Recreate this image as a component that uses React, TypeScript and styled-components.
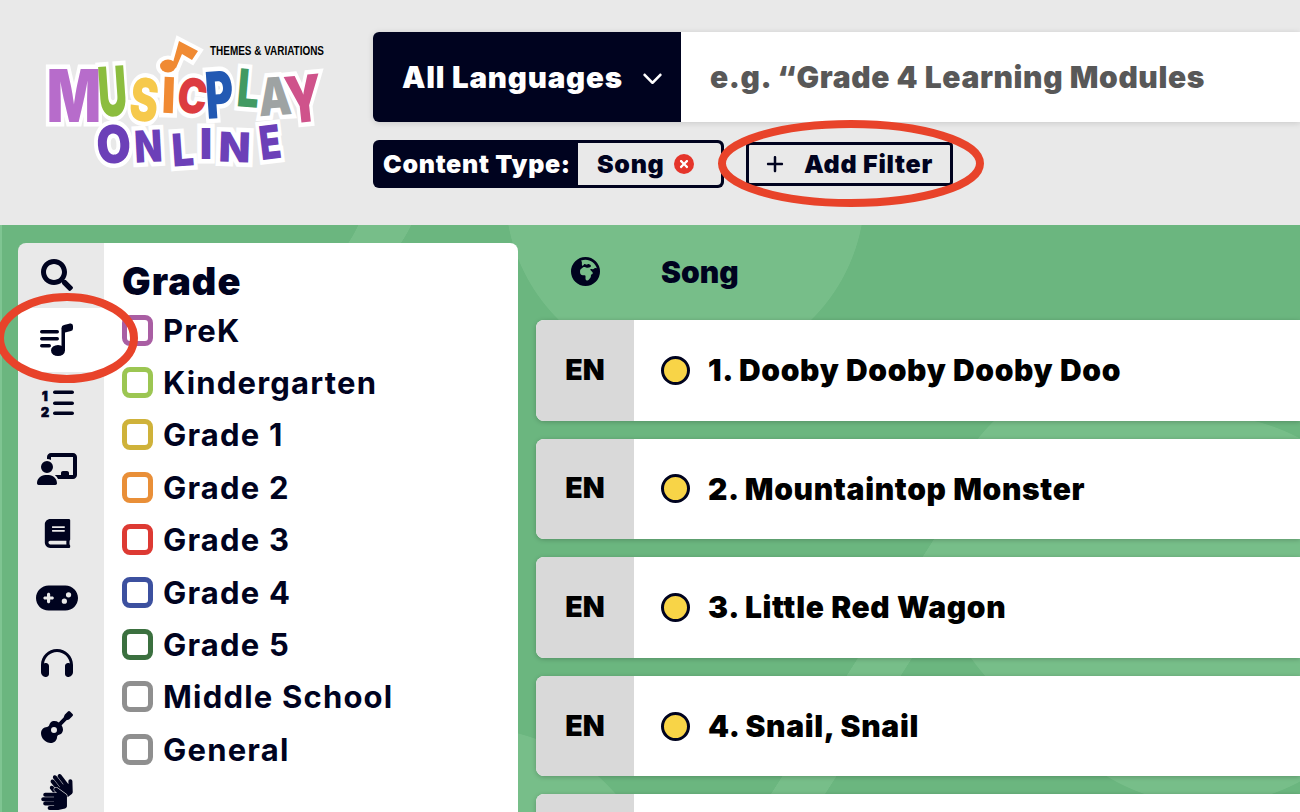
import React from "react";
import styled, { createGlobalStyle } from "styled-components";
import { FaChalkboardUser, FaGamepad, FaHeadphones, FaGuitar, FaEarthAfrica, FaPlus, FaChevronDown } from "react-icons/fa6";
import { FaBook, FaSignLanguage, FaTimes, FaSearch } from "react-icons/fa";

const navy = "#00031f";
const font = `"Inter", "Noto Sans", sans-serif`;
const light = "#77be89";
const base = "#6bb67f";

const Global = createGlobalStyle`
  html, body { margin: 0; padding: 0; background: #e9e9e9; }
  body { font-family: ${font}; color: ${navy}; }
  #root { width: 1300px; height: 812px; overflow: hidden; }
`;

const Page = styled.div`
  position: relative;
  width: 1300px;
  height: 812px;
  overflow: hidden;
  display: flex;
  flex-direction: column;
`;

const Header = styled.header`
  height: 225px;
  flex: none;
  background: #e9e9e9;
  display: flex;
  padding: 32px 0 0 373px;
  box-sizing: border-box;
  position: relative;
`;

const LogoSvg = styled.svg`
  position: absolute;
  left: 0;
  top: 0;
`;

const HeaderCol = styled.div`
  flex: 1;
  display: flex;
  flex-direction: column;
  gap: 18px;
`;

const SearchBar = styled.div`
  height: 90px;
  display: flex;
  background: #fff;
  border-radius: 6px 0 0 6px;
  box-shadow: 0 1px 6px rgba(0, 0, 0, 0.14);
`;

const LangSelect = styled.div`
  width: 308px;
  flex: none;
  background: ${navy};
  color: #fff;
  border-radius: 6px 0 0 6px;
  display: flex;
  align-items: center;
  padding-left: 29px;
  gap: 19px;
  box-sizing: border-box;
  font-size: 29.5px;
  letter-spacing: 0.8px;
  font-weight: 900;
  white-space: nowrap;
`;

const Placeholder = styled.div`
  display: flex;
  align-items: center;
  padding-left: 29px;
  font-size: 30px;
  letter-spacing: 0.6px;
  font-weight: 900;
  color: #585858;
  white-space: nowrap;
`;

const FilterRow = styled.div`
  display: flex;
  align-items: center;
  gap: 22px;
`;

const ActiveFilter = styled.div`
  height: 48px;
  width: 351px;
  box-sizing: border-box;
  background: ${navy};
  border-radius: 6px;
  display: flex;
  padding: 3px;
  color: #fff;
  font-weight: 900;
  font-size: 25px;
  letter-spacing: 0.7px;
`;

const FilterLabel = styled.div`
  width: 202px;
  flex: none;
  padding-left: 7px;
  box-sizing: border-box;
  display: flex;
  align-items: center;
  white-space: nowrap;
`;

const FilterValue = styled.div`
  flex: 1;
  background: #e9e9e9;
  color: ${navy};
  border-radius: 0 4px 4px 0;
  display: flex;
  align-items: center;
  padding-left: 19px;
  gap: 9px;
`;

const RemoveDot = styled.span`
  width: 20px;
  height: 20px;
  border-radius: 50%;
  background: #e5352b;
  display: inline-flex;
  align-items: center;
  justify-content: center;
  color: #fff;
  font-size: 12px;
`;

const AddFilter = styled.div`
  height: 44px;
  width: 207px;
  box-sizing: border-box;
  border: 3px solid ${navy};
  border-radius: 4px;
  display: flex;
  align-items: center;
  padding-left: 16px;
  gap: 19px;
  font-weight: 900;
  font-size: 25px;
  letter-spacing: 0.75px;
  white-space: nowrap;
`;

const Main = styled.main`
  flex: 1;
  min-height: 0;
  display: flex;
  padding: 18px 0 0 18px;
  background-color: ${base};
  background-repeat: no-repeat;
  background-size:
    100% 100%, 100% 100%, 100% 100%, 100% 100%, 100% 100%, 100% 100%, 100% 100%,
    1300px 397px;
  background-position: 0 0, 0 0, 0 0, 0 0, 0 0, 0 0, 0 0, 0 190px;
  background-image:
    linear-gradient(90deg, #7fc592 2px, transparent 2px),
    radial-gradient(circle 180px at 685px -33px, ${light} 99.6%, transparent 100%),
    radial-gradient(circle 142px at 230px -60px, ${base} 99.6%, transparent 100%),
    radial-gradient(circle 140px at 285px -60px, ${light} 99.6%, transparent 100%),
    radial-gradient(circle 185px at 1123px 328px, ${light} 99.6%, transparent 100%),
    radial-gradient(circle 195px at 1208px 385px, ${light} 99.6%, transparent 100%),
    radial-gradient(circle 193px at 470px 695px, ${light} 99.6%, transparent 100%),
    linear-gradient(122.6deg, transparent 853.5px, ${light} 854px, ${light} 899px, transparent 899.5px);
  box-sizing: border-box;
`;

const Rail = styled.nav`
  width: 86px;
  flex: none;
  background: #e9e9e9;
  border-radius: 8px 0 0 0;
  display: flex;
  flex-direction: column;
  align-items: stretch;
`;

const RailItem = styled.div<{ $active?: boolean }>`
  height: 64.6px;
  flex: none;
  display: flex;
  align-items: center;
  justify-content: center;
  padding-right: 8px;
  font-size: 32px;
  color: ${navy};
  background: ${(p) => (p.$active ? "#fff" : "transparent")};
`;

const GradePanel = styled.aside`
  width: 414px;
  flex: none;
  background: #fff;
  border-radius: 0 8px 0 0;
  padding: 18px 0 0 18px;
  box-sizing: border-box;
`;

const PanelTitle = styled.h2`
  margin: 0 0 3px;
  font-size: 38px;
  line-height: 40px;
  letter-spacing: 1px;
  font-weight: 900;
`;

const GradeList = styled.div`
  display: flex;
  flex-direction: column;
`;

const GradeRow = styled.label`
  height: 52.4px;
  display: flex;
  align-items: center;
  gap: 10px;
  font-size: 31px;
  letter-spacing: 1.2px;
  font-weight: 700;
  white-space: nowrap;
`;

const Check = styled.span<{ $c: string }>`
  width: 31px;
  height: 31px;
  box-sizing: border-box;
  border: 5px solid ${(p) => p.$c};
  border-radius: 8px;
  flex: none;
`;

const Results = styled.section`
  flex: 1;
  min-width: 0;
  padding-left: 18px;
`;

const ResultsHead = styled.div`
  height: 77px;
  box-sizing: border-box;
  padding-bottom: 19px;
  display: flex;
  align-items: center;
  font-size: 30px;
  font-weight: 900;
`;

const HeadLang = styled.div`
  width: 98px;
  flex: none;
  display: flex;
  justify-content: center;
  margin-top: -1px;
  font-size: 29px;
`;

const HeadTitle = styled.div`
  padding-left: 27px;
`;

const SongRows = styled.div`
  display: flex;
  flex-direction: column;
  gap: 18.1px;
`;

const SongRow = styled.div`
  height: 100.5px;
  flex: none;
  display: flex;
  background: #fff;
  border-radius: 8px 0 0 8px;
  box-shadow: 0 1px 5px rgba(0, 0, 0, 0.22);
  overflow: hidden;
`;

const LangCell = styled.div`
  width: 98px;
  flex: none;
  background: #d9d9d9;
  display: flex;
  align-items: center;
  justify-content: center;
  font-size: 28.5px;
  font-weight: 900;
  color: #000;
  padding-bottom: 2px;
  box-sizing: border-box;
`;

const TitleCell = styled.div`
  display: flex;
  align-items: center;
  padding-left: 27px;
  gap: 18px;
  font-size: 30px;
  letter-spacing: 0.65px;
  font-weight: 900;
  color: #000;
  white-space: nowrap;
`;

const Dot = styled.span`
  width: 29px;
  height: 29px;
  box-sizing: border-box;
  border-radius: 50%;
  background: #f8d447;
  border: 3px solid ${navy};
  flex: none;
`;

const Marks = styled.svg`
  position: absolute;
  inset: 0;
  pointer-events: none;
`;

const Digit = styled.text`
  font-family: "Inter", sans-serif;
  font-weight: 900;
  font-size: 12.5px;
  stroke: currentColor;
  stroke-width: 0.7px;
`;

const SongListIcon = () => (
  <svg width="34" height="34" viewBox="0 0 34 34" fill="currentColor">
    <rect x="0" y="7" width="19" height="3.5" rx="1.7" />
    <rect x="0" y="14" width="19" height="3.5" rx="1.7" />
    <rect x="0" y="21" width="11" height="3.5" rx="1.7" />
    <ellipse cx="18" cy="27.5" rx="7" ry="5.5" />
    <rect x="21.5" y="5" width="3.5" height="23" />
    <path d="M21.5 5 Q21.5 2.5 24 2 L30 0.5 Q33 0 33 3 V5.5 Q33 7.5 31 8 L25 9.5 Z" />
  </svg>
);

const NumberListIcon = () => (
  <svg width="33" height="38" viewBox="0 0 33 38" fill="currentColor">
    <Digit x="1" y="16">1</Digit>
    <Digit x="0" y="32">2</Digit>
    <rect x="12" y="5.5" width="21" height="3.6" rx="1.8" />
    <rect x="12" y="16.5" width="21" height="3.6" rx="1.8" />
    <rect x="12" y="26.5" width="21" height="3.6" rx="1.8" />
  </svg>
);

type Letter = { ch: string; cx: number; y: number; h: number; sx: number; r: number; c: string };
const purple = "#6c40b8";
const letters: Letter[] = [
  { ch: "M", cx: 74, y: 122, h: 53, sx: 0.78, r: 0, c: "#b76ccb" },
  { ch: "U", cx: 114, y: 116, h: 50, sx: 0.58, r: -4, c: "#8cbd3f" },
  { ch: "S", cx: 142, y: 121, h: 43, sx: 0.72, r: 6, c: "#f6c94c" },
  { ch: "I", cx: 168, y: 113, h: 36, sx: 0.95, r: 2, c: "#f08a33" },
  { ch: "C", cx: 190, y: 113, h: 35, sx: 0.82, r: 8, c: "#dc3c40" },
  { ch: "P", cx: 221, y: 118, h: 47, sx: 0.66, r: -4, c: "#2359b3" },
  { ch: "L", cx: 247, y: 107, h: 38, sx: 0.74, r: 5, c: "#429a62" },
  { ch: "A", cx: 276, y: 115, h: 38, sx: 0.8, r: -4, c: "#9ea3a3" },
  { ch: "Y", cx: 306, y: 122, h: 47, sx: 0.74, r: -6, c: "#cf538b" },
  { ch: "O", cx: 115, y: 163, h: 38, sx: 0.85, r: -4, c: purple },
  { ch: "N", cx: 149, y: 162, h: 32, sx: 0.82, r: -3, c: purple },
  { ch: "L", cx: 184, y: 166, h: 33, sx: 0.85, r: -4, c: purple },
  { ch: "I", cx: 206, y: 159, h: 31, sx: 1, r: 0, c: purple },
  { ch: "N", cx: 234, y: 162, h: 30, sx: 1, r: 2, c: purple },
  { ch: "E", cx: 272, y: 159, h: 34, sx: 0.74, r: -7, c: purple },
];

const LogoLetter = styled.text<{ $halo?: boolean }>`
  font-family: "Inter", sans-serif;
  font-weight: 900;
  text-anchor: middle;
  stroke: ${(p) => (p.$halo ? "#fff" : "none")};
  stroke-width: ${(p) => (p.$halo ? "9px" : "0")};
  stroke-linejoin: miter;
`;

const LogoSub = styled.text`
  font-family: "Liberation Sans", sans-serif;
  font-weight: 700;
  font-size: 13px;
  fill: #000;
`;

const renderLetters = (halo: boolean) =>
  letters.map((l, i) => (
    <LogoLetter
      key={i}
      $halo={halo}
      x={0}
      y={0}
      fontSize={l.h / 0.727}
      fill={l.c}
      transform={`translate(${l.cx} ${l.y}) rotate(${l.r}) scale(${l.sx} 1)`}
    >
      {l.ch}
    </LogoLetter>
  ));

const Note = ({ stroke }: { stroke: string }) => (
  <g fill="#f08a33" stroke={stroke} strokeWidth={stroke === "none" ? 0 : 8} strokeLinejoin="miter">
    <ellipse cx="168" cy="66" rx="8" ry="6.5" />
    <path d="M172 66 L179 41 L198 51 L192 60 L182 54 L176 68 Z" />
  </g>
);

const Logo = () => (
  <LogoSvg width="360" height="225" viewBox="0 0 360 225">
    <Note stroke="#fff" />
    {renderLetters(true)}
    <Note stroke="none" />
    {renderLetters(false)}
    <LogoSub x="210" y="55" textLength="114" lengthAdjust="spacingAndGlyphs">THEMES &amp; VARIATIONS</LogoSub>
  </LogoSvg>
);

const grades: [string, string][] = [
  ["PreK", "#a95ea3"],
  ["Kindergarten", "#9cc652"],
  ["Grade 1", "#cfb23a"],
  ["Grade 2", "#e98f38"],
  ["Grade 3", "#dd3a33"],
  ["Grade 4", "#3c509f"],
  ["Grade 5", "#3b703f"],
  ["Middle School", "#8f8f8f"],
  ["General", "#8f8f8f"],
];

const songs = ["1. Dooby Dooby Dooby Doo", "2. Mountaintop Monster", "3. Little Red Wagon", "4. Snail, Snail", ""];

export default function App() {
  return (
    <Page>
      <Global />
      <Header>
        <Logo />
        <HeaderCol>
          <SearchBar>
            <LangSelect>All Languages <FaChevronDown size={21} /></LangSelect>
            <Placeholder>e.g. “Grade 4 Learning Modules</Placeholder>
          </SearchBar>
          <FilterRow>
            <ActiveFilter>
              <FilterLabel>Content Type:</FilterLabel>
              <FilterValue>Song <RemoveDot><FaTimes /></RemoveDot></FilterValue>
            </ActiveFilter>
            <AddFilter><FaPlus size={20} /> Add Filter</AddFilter>
          </FilterRow>
        </HeaderCol>
      </Header>
      <Main>
        <Rail>
          <RailItem><FaSearch /></RailItem>
          <RailItem $active><SongListIcon /></RailItem>
          <RailItem><NumberListIcon /></RailItem>
          <RailItem><FaChalkboardUser size={40} /></RailItem>
          <RailItem><FaBook size={29} /></RailItem>
          <RailItem><FaGamepad size={42} /></RailItem>
          <RailItem><FaHeadphones /></RailItem>
          <RailItem><FaGuitar /></RailItem>
          <RailItem><FaSignLanguage size={36} /></RailItem>
        </Rail>
        <GradePanel>
          <PanelTitle>Grade</PanelTitle>
          <GradeList>
            {grades.map(([g, c]) => (
              <GradeRow key={g}><Check $c={c} />{g}</GradeRow>
            ))}
          </GradeList>
        </GradePanel>
        <Results>
          <ResultsHead>
            <HeadLang><FaEarthAfrica /></HeadLang>
            <HeadTitle>Song</HeadTitle>
          </ResultsHead>
          <SongRows>
            {songs.map((s, i) => (
              <SongRow key={i}>
                <LangCell>{s && "EN"}</LangCell>
                <TitleCell>{s && <Dot />}{s}</TitleCell>
              </SongRow>
            ))}
          </SongRows>
        </Results>
      </Main>
      <Marks width="1300" height="812" viewBox="0 0 1300 812">
        <ellipse cx="851" cy="163.5" rx="129" ry="39.5" fill="none" stroke="#e8432a" strokeWidth="8" />
        <ellipse cx="67" cy="338" rx="67" ry="41" fill="none" stroke="#e8432a" strokeWidth="8" />
      </Marks>
    </Page>
  );
}
